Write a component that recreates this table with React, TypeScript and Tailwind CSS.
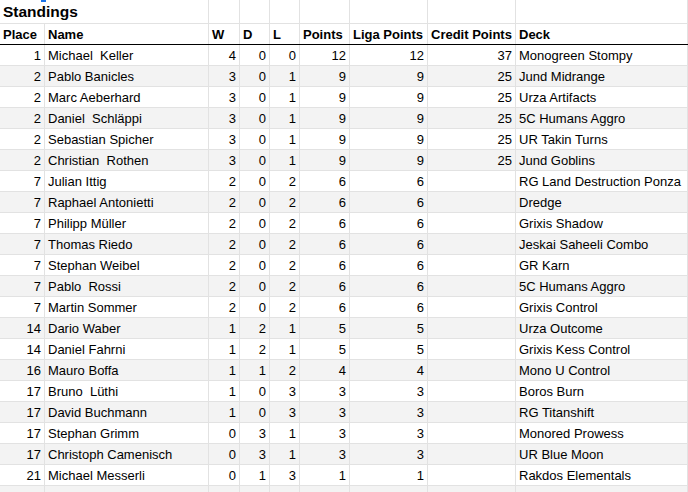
import React from "react";

type Row = [string, string, string, string, string, string, string, string, string];

const rows: Row[] = [
  ["1", "Michael  Keller", "4", "0", "0", "12", "12", "37", "Monogreen Stompy"],
  ["2", "Pablo Banicles", "3", "0", "1", "9", "9", "25", "Jund Midrange"],
  ["2", "Marc Aeberhard", "3", "0", "1", "9", "9", "25", "Urza Artifacts"],
  ["2", "Daniel  Schläppi", "3", "0", "1", "9", "9", "25", "5C Humans Aggro"],
  ["2", "Sebastian Spicher", "3", "0", "1", "9", "9", "25", "UR Takin Turns"],
  ["2", "Christian  Rothen", "3", "0", "1", "9", "9", "25", "Jund Goblins"],
  ["7", "Julian Ittig", "2", "0", "2", "6", "6", "", "RG Land Destruction Ponza"],
  ["7", "Raphael Antonietti", "2", "0", "2", "6", "6", "", "Dredge"],
  ["7", "Philipp Müller", "2", "0", "2", "6", "6", "", "Grixis Shadow"],
  ["7", "Thomas Riedo", "2", "0", "2", "6", "6", "", "Jeskai Saheeli Combo"],
  ["7", "Stephan Weibel", "2", "0", "2", "6", "6", "", "GR Karn"],
  ["7", "Pablo  Rossi", "2", "0", "2", "6", "6", "", "5C Humans Aggro"],
  ["7", "Martin Sommer", "2", "0", "2", "6", "6", "", "Grixis Control"],
  ["14", "Dario Waber", "1", "2", "1", "5", "5", "", "Urza Outcome"],
  ["14", "Daniel Fahrni", "1", "2", "1", "5", "5", "", "Grixis Kess Control"],
  ["16", "Mauro Boffa", "1", "1", "2", "4", "4", "", "Mono U Control"],
  ["17", "Bruno  Lüthi", "1", "0", "3", "3", "3", "", "Boros Burn"],
  ["17", "David Buchmann", "1", "0", "3", "3", "3", "", "RG Titanshift"],
  ["17", "Stephan Grimm", "0", "3", "1", "3", "3", "", "Monored Prowess"],
  ["17", "Christoph Camenisch", "0", "3", "1", "3", "3", "", "UR Blue Moon"],
  ["21", "Michael Messerli", "0", "1", "3", "1", "1", "", "Rakdos Elementals"],
];

const widths = [
  "w-[45px]",
  "w-[164px]",
  "w-[31px]",
  "w-[30px]",
  "w-[30px]",
  "w-[50px]",
  "w-[78px]",
  "w-[88px]",
  "flex-1",
];

const headers = ["Place", "Name", "W", "D", "L", "Points", "Liga Points", "Credit Points", "Deck"];

const numeric = [true, false, true, true, true, true, true, true, false];

function Cell({
  i,
  children,
  right,
  bold,
}: {
  i: number;
  children?: React.ReactNode;
  right?: boolean;
  bold?: boolean;
}) {
  return (
    <div
      className={`${widths[i]} shrink-0 h-full border-r border-[#e2e2e2] px-[3px] pt-px whitespace-pre overflow-visible leading-[20px] ${
        right ? "text-right" : "text-left"
      } ${bold ? "font-bold" : ""}`}
    >
      {children}
    </div>
  );
}

export default function App() {
  return (
    <div
      className="relative w-[688px] h-[492px] overflow-hidden bg-white text-black text-[13px]"
      style={{ fontFamily: '"Liberation Sans", Arial, sans-serif' }}
    >
      <span className="absolute left-[41px] top-0 w-[5px] h-[2px] bg-[#1a73e8]" />
      {/* title row */}
      <div className="flex h-[24px] border-b border-[#e2e2e2]">
        <div className="w-[209px] shrink-0 border-r border-[#e2e2e2] px-[3px] text-[15.5px] font-bold leading-[23px] whitespace-nowrap">
          Standings
        </div>
        {widths.slice(2).map((w, i) => (
          <div key={i} className={`${w} shrink-0 h-full border-r border-[#e2e2e2]`} />
        ))}
      </div>
      {/* header row */}
      <div className="flex h-[21px] border-b border-black">
        {headers.map((h, i) => (
          <Cell key={i} i={i} bold>
            {h}
          </Cell>
        ))}
      </div>
      {rows.map((r, ri) => (
        <div
          key={ri}
          className={`flex h-[21px] border-b border-[#e2e2e2] ${ri % 2 === 1 ? "bg-[#f3f3f3]" : "bg-white"}`}
        >
          {r.map((v, i) => (
            <Cell key={i} i={i} right={numeric[i]}>
              {v}
            </Cell>
          ))}
        </div>
      ))}
      <div className="flex h-[21px] border-b border-[#e2e2e2] bg-[#f3f3f3]">
        {widths.map((w, i) => (
          <div key={i} className={`${w} shrink-0 h-full border-r border-[#e2e2e2]`} />
        ))}
      </div>
    </div>
  );
}
